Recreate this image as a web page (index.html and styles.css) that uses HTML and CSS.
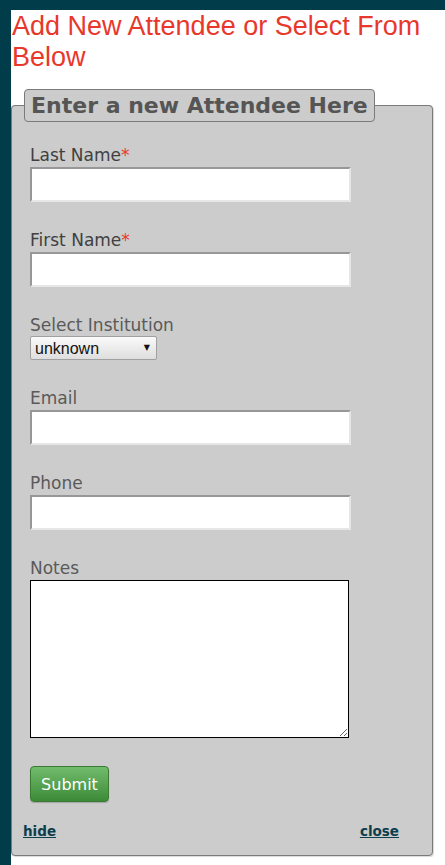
FILE: index.html
```html
<!DOCTYPE html>
<html>
<head>
<meta charset="utf-8">
<link rel="stylesheet" href="styles.css">
</head>
<body>
<div class="page">
  <h1 class="title">Add New Attendee or Select From Below</h1>
  <form class="form">
    <fieldset class="box">
      <legend class="legend">Enter a new Attendee Here</legend>
      <div class="fields">
        <div class="field">
          <label class="label req">Last Name<span class="star">*</span></label>
          <input class="text" type="text">
        </div>
        <div class="field">
          <label class="label req">First Name<span class="star">*</span></label>
          <input class="text" type="text">
        </div>
        <div class="field">
          <label class="label">Select Institution</label>
          <span class="select-wrap"><select class="select"><option>unknown</option></select></span>
        </div>
        <div class="field">
          <label class="label">Email</label>
          <input class="text" type="text">
        </div>
        <div class="field">
          <label class="label">Phone</label>
          <input class="text" type="text">
        </div>
        <div class="field">
          <label class="label">Notes</label>
          <textarea class="notes"></textarea>
        </div>
        <div class="actions">
          <button class="submit" type="button">Submit</button>
        </div>
      </div>
      <div class="links">
        <a class="link" href="#">hide</a>
        <a class="link" href="#">close</a>
      </div>
    </fieldset>
  </form>
</div>
</body>
</html>
```

FILE: styles.css
```css
html, body {
  margin: 0;
  padding: 0;
}
body {
  background: #013c4b;
  height: 865px;
  overflow: hidden;
}
.page {
  margin: 10px 0 0 11px;
  background: #fff;
  height: 855px;
}
.title {
  margin: 0;
  padding: 1px 0 0 1px;
  font-family: "Liberation Sans", Arial, sans-serif;
  font-size: 27px;
  font-weight: normal;
  line-height: 31px;
  color: #e8372b;
}
.form {
  margin: 16px 12px 0 0;
}
.box {
  margin: 0;
  background: #cccccc;
  border: 1px solid #7a7a7a;
  border-radius: 4px;
  padding: 23px 12px 16px 11px;
  box-shadow: 1px 1px 1px rgba(0,0,0,0.15);
}
.legend {
  margin-left: 1px;
  padding: 0 6px;
  height: 31px;
  line-height: 31px;
  background: #cccccc;
  border: 1px solid #7a7a7a;
  border-radius: 4px;
  font-family: "DejaVu Sans", Verdana, sans-serif;
  font-weight: bold;
  font-size: 22px;
  color: #555;
}
.fields {
  display: flex;
  flex-direction: column;
  padding-left: 7px;
}
.field {
  display: flex;
  flex-direction: column;
  align-items: flex-start;
  margin-bottom: 28px;
}
.label {
  display: block;
  font-family: "DejaVu Sans", Verdana, sans-serif;
  font-size: 17px;
  line-height: 20px;
  margin-bottom: 2px;
  color: #5a5a5a;
}
.label.req {
  color: #404040;
}
.star {
  color: #e8372b;
}
.text {
  box-sizing: border-box;
  width: 321px;
  height: 35px;
  margin: 0;
  padding: 2px 4px;
  background: #fff;
  border-style: solid;
  border-width: 2px;
  border-color: #979797 #e6e6e6 #e6e6e6 #979797;
  font-family: "DejaVu Sans", sans-serif;
  font-size: 16px;
}
.select-wrap {
  position: relative;
  display: inline-block;
  margin-top: -1px;
}
.select-wrap::after {
  content: "\25BC";
  position: absolute;
  right: 7px;
  top: 7px;
  font-family: "DejaVu Sans", sans-serif;
  font-size: 8px;
  line-height: 10px;
  color: #111;
  pointer-events: none;
}
.select {
  -webkit-appearance: none;
  appearance: none;
  box-sizing: border-box;
  width: 127px;
  height: 24px;
  margin: 0;
  padding: 0 0 0 4px;
  border: 1px solid #a0a0a0;
  border-radius: 2px;
  background: linear-gradient(#fafafa, #dedede);
  font-family: "Liberation Sans", Arial, sans-serif;
  font-size: 16px;
  color: #111;
}
.notes {
  box-sizing: border-box;
  width: 319px;
  height: 158px;
  margin: 0;
  border: 1px solid #000;
  background: #fff;
  resize: both;
}
.actions {
  display: flex;
  margin-bottom: 21px;
}
.submit {
  box-sizing: border-box;
  width: 79px;
  height: 36px;
  padding: 0;
  border: 1px solid #3a7a33;
  border-radius: 4px;
  background: linear-gradient(#72bd6d, #3c8a37);
  font-family: "DejaVu Sans", sans-serif;
  font-size: 16px;
  color: #fff;
  box-shadow: 0 1px 1px rgba(0,0,0,0.2);
}
.links {
  display: flex;
  justify-content: space-between;
  padding-right: 21px;
}
.link {
  font-family: "DejaVu Sans", Verdana, sans-serif;
  font-weight: bold;
  font-size: 13.5px;
  color: #0d3e4c;
  text-decoration: underline;
}
```
